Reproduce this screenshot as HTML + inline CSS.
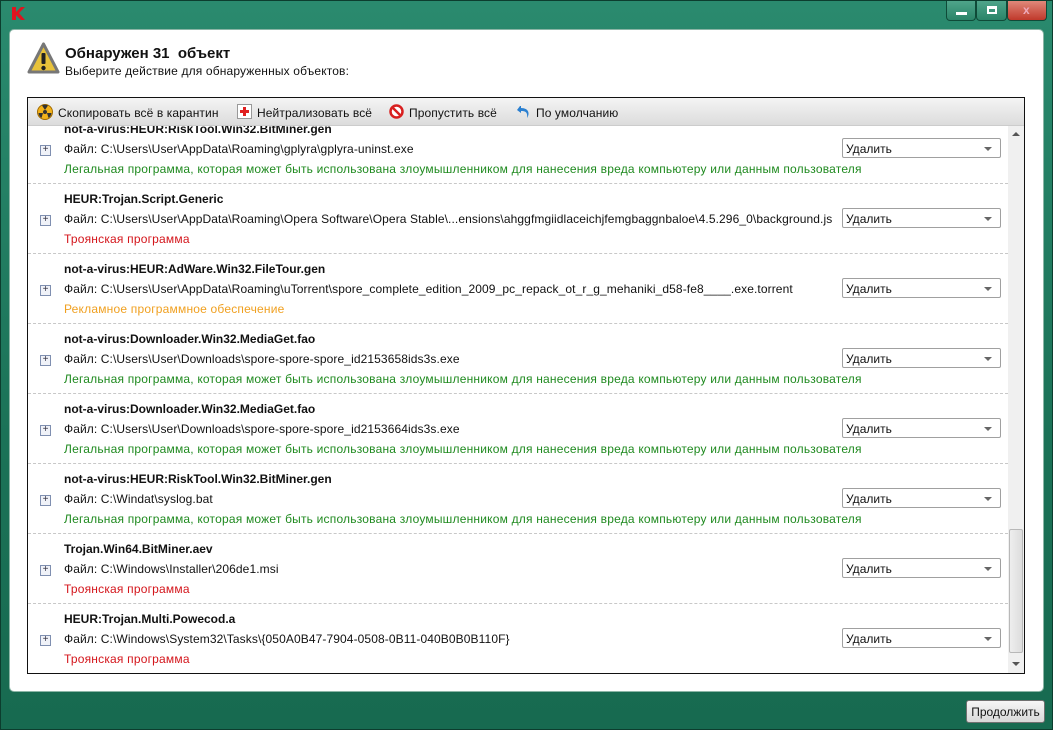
<!DOCTYPE html>
<html><head><meta charset="utf-8">
<style>
*{margin:0;padding:0;box-sizing:border-box}
body{width:1053px;height:730px;overflow:hidden;background:#1d7a5f;font-family:"Liberation Sans","DejaVu Sans",sans-serif;font-size:12px;color:#111;position:relative}
.frame{position:absolute;left:0;top:0;width:1053px;height:730px;background:linear-gradient(#2a8a6e,#1b7257 60%,#176a50);border:1px solid #0c3d2e}
.logo{position:absolute;left:11px;top:6px;width:15px;height:15px}
.wb{position:absolute;top:1px;height:20px;border:1px solid #0f4a38;border-top:none;border-radius:0 0 4px 4px}
.panel{position:absolute;left:9px;top:29px;width:1035px;height:663px;background:#fff;border-radius:5px;border:1px solid #8bb5a6}
.h1{position:absolute;left:65px;top:45px;font-size:15px;font-weight:bold}
.h2{position:absolute;left:65px;top:64px;font-size:12px;letter-spacing:.15px}
.list{position:absolute;left:27px;top:97px;width:998px;height:577px;border:1px solid #111;overflow:hidden;background:#fff}
.tb{position:absolute;left:0;top:0;width:996px;height:28px;background:linear-gradient(#f4f4f4,#dcdcdc);z-index:2;border-bottom:1px solid #ccc}
.tb span{position:absolute;top:8px;font-size:12px;letter-spacing:.1px}
.row{position:absolute;left:0;width:980px;height:70px;border-bottom:1px dashed #c8c8c8}
.row .t{position:absolute;left:36px;top:8px;font-weight:bold;font-size:12px}
.row .f{position:absolute;left:36px;top:28px;white-space:nowrap;letter-spacing:.1px}
.row .d{position:absolute;left:36px;top:48px;white-space:nowrap;letter-spacing:.2px}
.g{color:#1f8a1f}.r{color:#d4151b}.o{color:#f0a020}
.pl{position:absolute;left:12px;top:31px;width:11px;height:11px;border:1px solid #7f8fb0;background:#f0f2f8;font-size:10px;line-height:8px;text-align:center;color:#334}
.sel{position:absolute;left:814px;top:24px;width:159px;height:20px;border:1px solid #a0a0a0;border-radius:2px;background:#fff;padding:3px 0 0 3px;font-size:12px}
.sel:after{content:"";position:absolute;right:8px;top:8px;border:4px solid transparent;border-top:4px solid #666}
.sb{position:absolute;left:980px;top:28px;width:16px;height:547px;background:#f0f0f0}
.thumb{position:absolute;left:1px;top:403px;width:14px;height:124px;border:1px solid #b8b8b8;border-radius:2px;background:linear-gradient(90deg,#eee,#ddd)}
.btn{position:absolute;left:966px;top:700px;width:79px;height:23px;border:1px solid #707070;border-radius:3px;background:linear-gradient(#f6f6f6,#d8d8d8);text-align:center;padding-top:4px;font-size:12px}
</style></head><body>
<div class="frame"></div>
<svg class="logo" viewBox="0 0 15 15"><path d="M1 1h4v5l5-5h4l-6 6 6 7h-4L5 9v5H1z" fill="#e0141e"/></svg>
<div class="wb" style="left:946px;width:30px;background:linear-gradient(#4fa58a,#2a8468)"><div style="position:absolute;left:9px;top:11px;width:11px;height:3px;background:#fff"></div></div>
<div class="wb" style="left:976px;width:31px;background:linear-gradient(#4fa58a,#2a8468)"><div style="position:absolute;left:10px;top:5px;width:10px;height:8px;border:2px solid #fff;border-top-width:3px"></div></div>
<div class="wb" style="left:1007px;width:40px;background:linear-gradient(#e0887a,#c0392b)"><div style="position:absolute;left:15px;top:2px;color:#eab;font-weight:bold;font-size:12px">x</div></div>
<div class="panel"></div>
<svg style="position:absolute;left:27px;top:42px" width="33" height="34" viewBox="0 0 33 34"><path d="M16.5 2L31 30H2z" fill="#e8c23a" stroke="#777" stroke-width="3" stroke-linejoin="round"/><rect x="14.5" y="11" width="4" height="11" rx="1" fill="#222"/><circle cx="16.5" cy="26" r="2.2" fill="#222"/></svg>
<div class="h1">Обнаружен 31&nbsp; объект</div>
<div class="h2">Выберите действие для обнаруженных объектов:</div>
<div class="list">
<div class="tb">
<svg style="position:absolute;left:9px;top:6px" width="16" height="16"><circle cx="8" cy="8" r="7.5" fill="#f3b21a" stroke="#a06a00"/><circle cx="8" cy="8" r="2" fill="#333"/><path d="M8 6L5 1.5A7 7 0 0 1 11 1.5z M10 9L14.5 9A7 7 0 0 1 11.5 14z M6 9L1.5 9A7 7 0 0 0 4.5 14z" fill="#333"/></svg>
<span style="left:30px">Скопировать всё в карантин</span>
<svg style="position:absolute;left:209px;top:6px" width="15" height="15"><rect x=".5" y=".5" width="14" height="14" fill="#fff" stroke="#999"/><path d="M6 3h3v3h3v3H9v3H6V9H3V6h3z" fill="#e02020"/></svg>
<span style="left:229px">Нейтрализовать всё</span>
<svg style="position:absolute;left:361px;top:6px" width="15" height="15"><circle cx="7.5" cy="7.5" r="6" fill="#fff" stroke="#d82020" stroke-width="2.5"/><path d="M3.5 3.5l8 8" stroke="#d82020" stroke-width="2.5"/></svg>
<span style="left:381px">Пропустить всё</span>
<svg style="position:absolute;left:488px;top:6px" width="16" height="16"><path d="M4 2L1 6l4 3V7c4 0 7 1 6 7 3-4 2-10-6-10V2z" fill="#2a7fd0"/></svg>
<span style="left:508px">По умолчанию</span>
</div>

<div class="row" style="top:16px"><div class="t">not-a-virus:HEUR:RiskTool.Win32.BitMiner.gen</div><div class="pl">+</div><div class="f">Файл: C:\Users\User\AppData\Roaming\gplyra\gplyra-uninst.exe</div><div class="d g">Легальная программа, которая может быть использована злоумышленником для нанесения вреда компьютеру или данным пользователя</div><div class="sel">Удалить</div></div>
<div class="row" style="top:86px"><div class="t">HEUR:Trojan.Script.Generic</div><div class="pl">+</div><div class="f">Файл: C:\Users\User\AppData\Roaming\Opera Software\Opera Stable\...ensions\ahggfmgiidlaceichjfemgbaggnbaloe\4.5.296_0\background.js</div><div class="d r">Троянская программа</div><div class="sel">Удалить</div></div>
<div class="row" style="top:156px"><div class="t">not-a-virus:HEUR:AdWare.Win32.FileTour.gen</div><div class="pl">+</div><div class="f">Файл: C:\Users\User\AppData\Roaming\uTorrent\spore_complete_edition_2009_pc_repack_ot_r_g_mehaniki_d58-fe8____.exe.torrent</div><div class="d o">Рекламное программное обеспечение</div><div class="sel">Удалить</div></div>
<div class="row" style="top:226px"><div class="t">not-a-virus:Downloader.Win32.MediaGet.fao</div><div class="pl">+</div><div class="f">Файл: C:\Users\User\Downloads\spore-spore-spore_id2153658ids3s.exe</div><div class="d g">Легальная программа, которая может быть использована злоумышленником для нанесения вреда компьютеру или данным пользователя</div><div class="sel">Удалить</div></div>
<div class="row" style="top:296px"><div class="t">not-a-virus:Downloader.Win32.MediaGet.fao</div><div class="pl">+</div><div class="f">Файл: C:\Users\User\Downloads\spore-spore-spore_id2153664ids3s.exe</div><div class="d g">Легальная программа, которая может быть использована злоумышленником для нанесения вреда компьютеру или данным пользователя</div><div class="sel">Удалить</div></div>
<div class="row" style="top:366px"><div class="t">not-a-virus:HEUR:RiskTool.Win32.BitMiner.gen</div><div class="pl">+</div><div class="f">Файл: C:\Windat\syslog.bat</div><div class="d g">Легальная программа, которая может быть использована злоумышленником для нанесения вреда компьютеру или данным пользователя</div><div class="sel">Удалить</div></div>
<div class="row" style="top:436px"><div class="t">Trojan.Win64.BitMiner.aev</div><div class="pl">+</div><div class="f">Файл: C:\Windows\Installer\206de1.msi</div><div class="d r">Троянская программа</div><div class="sel">Удалить</div></div>
<div class="row" style="top:506px"><div class="t">HEUR:Trojan.Multi.Powecod.a</div><div class="pl">+</div><div class="f">Файл: C:\Windows\System32\Tasks\{050A0B47-7904-0508-0B11-040B0B0B110F}</div><div class="d r">Троянская программа</div><div class="sel">Удалить</div></div>

<div class="sb"><div style="position:absolute;left:4px;top:6px;border:4px solid transparent;border-bottom:4px solid #555;border-top:none"></div><div class="thumb"></div><div style="position:absolute;left:4px;top:536px;border:4px solid transparent;border-top:4px solid #555;border-bottom:none"></div></div>
</div>
<div class="btn">Продолжить</div>
</body></html>
